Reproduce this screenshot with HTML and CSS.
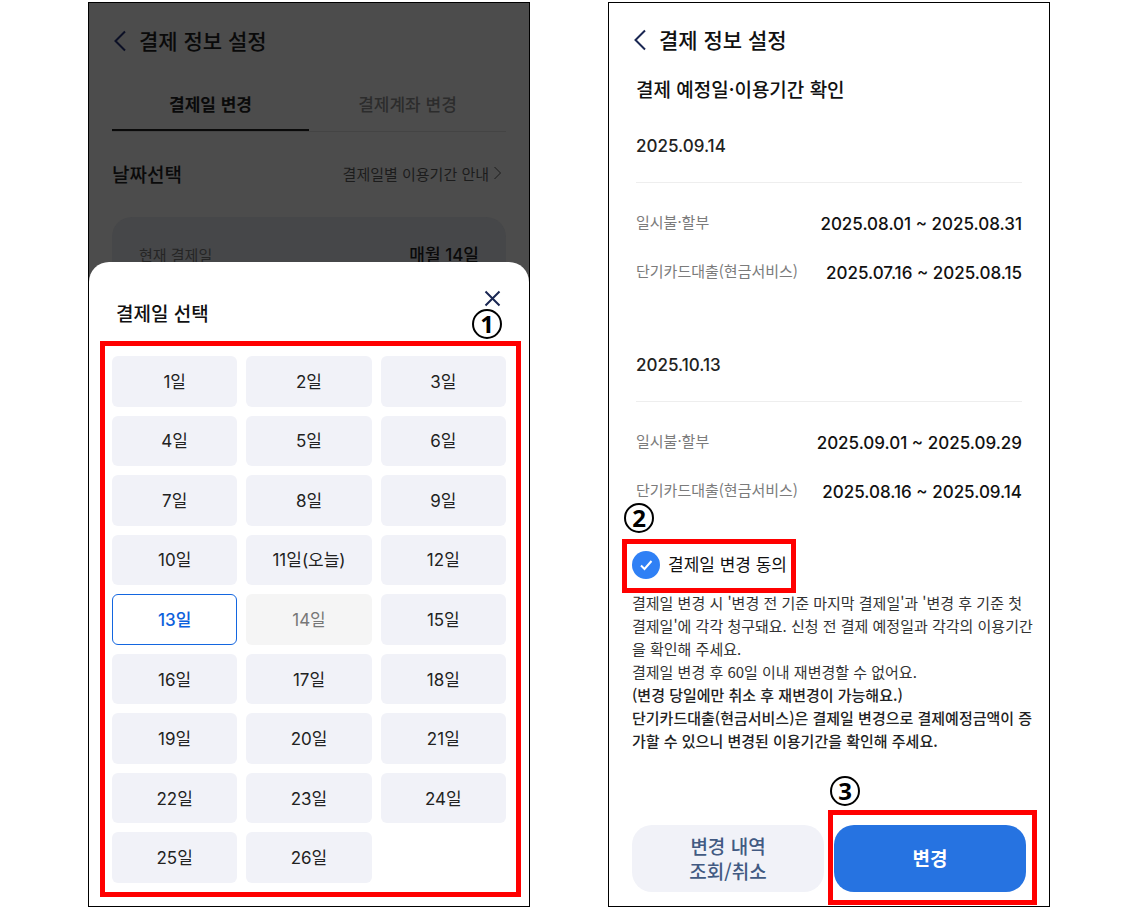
FILE: index.html
```html
<!DOCTYPE html>
<html lang="ko">
<head>
<meta charset="utf-8">
<meta name="viewport" content="width=device-width, initial-scale=1">
<title>결제 정보 설정</title>
<link rel="stylesheet" href="styles.css">
</head>
<body>
<main class="page">
  <section class="phone phone-dim">
    <div class="behind">
      <header class="topbar">
        <button class="back" type="button" aria-label="뒤로"><svg width="14" height="22" viewBox="0 0 14 22"><path d="M12 1.500 2.500 11 12 20.500"/></svg></button>
        <h1 class="title">결제 정보 설정</h1>
      </header>
      <nav class="tabs">
        <button class="tab tab-on" type="button">결제일 변경</button>
        <button class="tab" type="button">결제계좌 변경</button>
      </nav>
      <div class="pick">
        <h2 class="pick-title">날짜선택</h2>
        <a class="pick-link" href="#">결제일별 이용기간 안내 <svg width="9" height="16" viewBox="0 0 9 16"><path d="m1.500 2 6 6-6 6"/></svg></a>
      </div>
      <div class="current"><span>현재 결제일</span><b class="current-day">매월 14일</b></div>
    </div>
    <div class="sheet">
      <header class="sheet-head">
        <h2 class="sheet-title">결제일 선택</h2>
        <button class="close" type="button" aria-label="닫기"><svg width="17" height="17" viewBox="0 0 17 17"><path d="m1.500 1.500 14 14m0-14-14 14"/></svg></button>
        <span class="badge badge-one">1</span>
      </header>
      <div class="days">
        <button class="day" type="button">1일</button>
        <button class="day" type="button">2일</button>
        <button class="day" type="button">3일</button>
        <button class="day" type="button">4일</button>
        <button class="day" type="button">5일</button>
        <button class="day" type="button">6일</button>
        <button class="day" type="button">7일</button>
        <button class="day" type="button">8일</button>
        <button class="day" type="button">9일</button>
        <button class="day" type="button">10일</button>
        <button class="day" type="button">11일(오늘)</button>
        <button class="day" type="button">12일</button>
        <button class="day day-on" type="button">13일</button>
        <button class="day" type="button" disabled>14일</button>
        <button class="day" type="button">15일</button>
        <button class="day" type="button">16일</button>
        <button class="day" type="button">17일</button>
        <button class="day" type="button">18일</button>
        <button class="day" type="button">19일</button>
        <button class="day" type="button">20일</button>
        <button class="day" type="button">21일</button>
        <button class="day" type="button">22일</button>
        <button class="day" type="button">23일</button>
        <button class="day" type="button">24일</button>
        <button class="day" type="button">25일</button>
        <button class="day" type="button">26일</button>
      </div>
    </div>
  </section>

  <section class="phone">
    <header class="topbar">
      <button class="back" type="button" aria-label="뒤로"><svg width="14" height="22" viewBox="0 0 14 22"><path d="M12 1.500 2.500 11 12 20.500"/></svg></button>
      <h1 class="title">결제 정보 설정</h1>
    </header>
    <div class="periods">
      <h2 class="periods-title">결제 예정일·이용기간 확인</h2>
      <section class="period">
        <h3 class="date">2025.09.14</h3>
        <dl class="rows">
          <div class="row"><dt>일시불·할부</dt><dd>2025.08.01 ~ 2025.08.31</dd></div>
          <div class="row"><dt>단기카드대출(현금서비스)</dt><dd>2025.07.16 ~ 2025.08.15</dd></div>
        </dl>
      </section>
      <section class="period">
        <h3 class="date">2025.10.13</h3>
        <dl class="rows">
          <div class="row"><dt>일시불·할부</dt><dd>2025.09.01 ~ 2025.09.29</dd></div>
          <div class="row"><dt>단기카드대출(현금서비스)</dt><dd>2025.08.16 ~ 2025.09.14</dd></div>
        </dl>
      </section>
    </div>
    <div class="confirm">
      <div class="agree">
        <span class="badge badge-two">2</span>
        <label class="agree-label"><span class="tick"><input class="tick-box" type="checkbox" checked><svg class="tick-mark" width="28" height="28" viewBox="0 0 28 28"><path d="m9 14.500 3.500 3.500 7-8"/></svg></span><span class="agree-text">결제일 변경 동의</span></label>
      </div>
      <p class="note">결제일 변경 시 '변경 전 기준 마지막 결제일'과 '변경 후 기준 첫<br>결제일'에 각각 청구돼요. 신청 전 결제 예정일과 각각의 이용기간<br>을 확인해 주세요.<br>결제일 변경 후 60일 이내 재변경할 수 없어요.</p>
      <p class="note note-strong">(변경 당일에만 취소 후 재변경이 가능해요.)<br>단기카드대출(현금서비스)은 결제일 변경으로 결제예정금액이 증<br>가할 수 있으니 변경된 이용기간을 확인해 주세요.</p>
      <div class="actions">
        <button class="action" type="button">변경 내역<br>조회/취소</button>
        <div class="marked">
          <button class="action action-main" type="button">변경</button>
          <span class="badge badge-three">3</span>
        </div>
      </div>
    </div>
  </section>
</main>
</body>
</html>
```

FILE: styles.css
```css
* { box-sizing: border-box; }
body, h1, h2, h3, p, dl, dd { margin: 0; }
body {
  background: #fff;
  color: #111;
  font-family: "Noto Sans CJK KR", "Noto Sans", sans-serif;
}
button {
  padding: 0;
  border: 0;
  background: none;
  color: inherit;
  font: inherit;
}
svg { display: block; fill: none; stroke: currentColor; stroke-width: 2; }

.page {
  display: grid;
  grid-template-columns: repeat(2, minmax(0, 1fr));
  gap: 78px;
  min-height: 100vh;
  padding: 2px 88px 3px;
}
.phone {
  display: flex;
  flex-direction: column;
  border: 1px solid #000;
}
.phone-dim { background: #4c4c4c; }

.topbar {
  display: flex;
  align-items: center;
  gap: 12px;
  padding: 21px 24px 0;
}
.back { color: #1a2753; }
.title { padding-bottom: 2px; font-size: 21px; font-weight: 500; line-height: 30px; }
.phone-dim .topbar { padding-top: 22px; }
.phone-dim .back { color: #0c1026; }

.behind { color: #0a0a0a; }
.tabs {
  display: flex;
  margin: 20px 23px 0;
  border-bottom: 1px solid #444;
}
.tab {
  flex: 1;
  height: 54px;
  padding-bottom: 2px;
  color: #2c2c2c;
  font-size: 17px;
  font-weight: 500;
}
.tab-on { color: #0a0a0a; font-weight: 700; border-bottom: 2px solid #0a0a0a; padding-bottom: 0; }
.pick {
  display: flex;
  align-items: center;
  justify-content: space-between;
  padding: 28px 27px 0 23px;
}
.pick-title { font-size: 19px; font-weight: 500; line-height: 28px; }
.pick-link {
  display: flex;
  align-items: center;
  gap: 4px;
  padding-bottom: 2px;
  color: #1c1c1c;
  font-size: 15px;
  text-decoration: none;
}
.pick-link svg { stroke-width: 1; }
.current {
  display: flex;
  justify-content: space-between;
  margin: 29px 23px 0;
  padding: 26px 27px;
  border-radius: 20px;
  background: #464749;
  color: #252525;
  font-size: 15px;
  line-height: 24px;
}
.current-day { color: #0a0a0a; font-family: Inter, "Noto Sans CJK KR", sans-serif; font-size: 17px; font-weight: 500; }

.sheet {
  position: relative;
  display: flex;
  flex: 1;
  flex-direction: column;
  margin-top: -31px;
  padding: 0 8px 9px 11px;
  border-radius: 20px 20px 0 0;
  background: #fff;
}
.sheet-head {
  position: relative;
  display: flex;
  align-items: flex-start;
  justify-content: space-between;
  padding: 28px 20px 13px 16px;
}
.sheet-title { padding-top: 8px; font-size: 19px; font-weight: 500; line-height: 30px; }
.close { color: #1a2753; }
.badge {
  position: absolute;
  width: 30px;
  height: 30px;
  border: 2px solid #000;
  border-radius: 50%;
  color: #000;
  font: 700 24px/26px "Noto Sans", sans-serif;
  text-align: center;
}
.badge-one { right: 19px; bottom: 2px; }
.days {
  display: grid;
  flex: 1;
  grid-template-columns: repeat(3, 1fr);
  grid-auto-rows: 1fr;
  gap: 9px;
  padding: 10px 10px 9px 7px;
  border: 5px solid #f00;
}
.day {
  padding-bottom: 2px;
  border-radius: 6px;
  background: #f1f2f8;
  color: #222;
  font-family: Inter, "Noto Sans CJK KR", sans-serif;
  font-size: 17px;
}
.day-on { border: 1px solid #1366e0; background: #fff; color: #0c60dc; font-weight: 500; }
.day:disabled { background: #f5f5f5; color: #777; }

.periods { padding: 0 27px; }
.periods-title { padding-top: 19px; font-size: 19px; font-weight: 500; line-height: 28px; }
.period { height: 219px; padding-top: 29px; }
.date {
  padding-bottom: 22px;
  border-bottom: 1px solid #eee;
  color: #222;
  font: 500 17px/28px Inter, sans-serif;
}
.rows { padding-top: 15px; }
.row { display: flex; justify-content: space-between; align-items: center; height: 49px; }
.row dt { padding-bottom: 3px; color: #7b7b7b; font-size: 15px; }
.row dd { padding-top: 2px; font: 500 17px/24px Inter, sans-serif; }

.confirm {
  display: flex;
  flex: 1;
  flex-direction: column;
  padding: 0 23px 14px;
}
.agree {
  position: relative;
  align-self: flex-start;
  margin: -2px 0 -2px -10px;
  padding: 7px 4px 9px 5px;
  border: 5px solid #f00;
}
.badge-two { left: -3px; top: -41px; }
.agree-label { display: flex; align-items: center; gap: 8px; font-size: 17px; line-height: 24px; }
.agree-text { padding-bottom: 3px; }
.tick { display: grid; }
.tick-box { appearance: none; grid-area: 1 / 1; width: 28px; height: 28px; margin: 0; border-radius: 50%; background: #2f80f5; }
.tick-mark { grid-area: 1 / 1; color: #fff; z-index: 1; pointer-events: none; }
.note { color: #333; font-size: 15px; line-height: 23px; white-space: nowrap; }
.note-strong { color: #222; font-weight: 500; }
.actions {
  display: grid;
  grid-template-columns: 1fr 1fr;
  gap: 10px;
  margin-top: auto;
}
.action {
  width: 100%;
  height: 67px;
  padding-bottom: 2px;
  border-radius: 20px;
  background: #f1f2f8;
  color: #425a82;
  font-size: 19px;
  font-weight: 500;
  line-height: 25px;
}
.action-main { background: #2673e1; color: #fff; font-weight: 700; }
.marked { position: relative; }
.marked::before {
  position: absolute;
  inset: -15px -11px -13px -6px;
  border: 5px solid #f00;
  content: "";
  pointer-events: none;
}
.badge-three { left: -4px; top: -49px; }
```
